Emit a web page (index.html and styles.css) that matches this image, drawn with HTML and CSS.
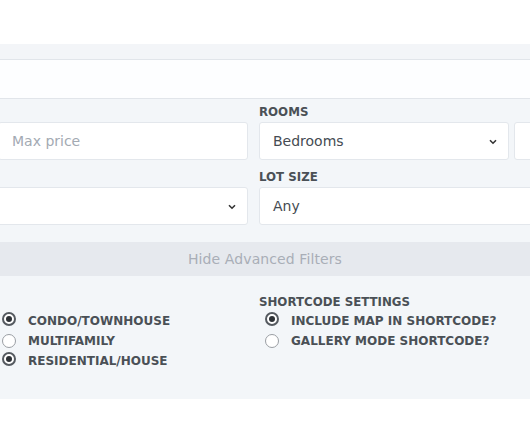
FILE: index.html
```html
<!DOCTYPE html>
<html>
<head>
<meta charset="utf-8">
<link rel="stylesheet" href="styles.css">
</head>
<body>
<div class="page">
  <div class="top"></div>
  <div class="band"></div>
  <div class="search"></div>
  <div class="filters">
    <div class="grid">
      <div class="col">
        <div class="label">&nbsp;</div>
        <div class="pair">
          <div class="field placeholder">&nbsp;</div>
          <div class="field placeholder">Max price</div>
        </div>
      </div>
      <div class="col">
        <div class="label">ROOMS</div>
        <div class="pair">
          <div class="field select">Bedrooms<svg class="chev" width="8" height="6" viewBox="0 0 8 6"><path d="M1 1.2 L4 4.2 L7 1.2" fill="none" stroke="#333" stroke-width="1.6"/></svg></div>
          <div class="field select">&nbsp;<svg class="chev" width="8" height="6" viewBox="0 0 8 6"><path d="M1 1.2 L4 4.2 L7 1.2" fill="none" stroke="#333" stroke-width="1.6"/></svg></div>
        </div>
      </div>
      <div class="col">
        <div class="label">&nbsp;</div>
        <div class="field select">&nbsp;<svg class="chev" width="8" height="6" viewBox="0 0 8 6"><path d="M1 1.2 L4 4.2 L7 1.2" fill="none" stroke="#333" stroke-width="1.6"/></svg></div>
      </div>
      <div class="col">
        <div class="label">LOT SIZE</div>
        <div class="field">Any</div>
      </div>
    </div>
  </div>
  <div class="toggle">Hide Advanced Filters</div>
  <div class="options">
    <div class="grid">
      <div class="col">
        <div class="label">&nbsp;</div>
        <ul class="radios left">
          <li><span class="radio on"></span>CONDO/TOWNHOUSE</li>
          <li><span class="radio"></span>MULTIFAMILY</li>
          <li><span class="radio on"></span>RESIDENTIAL/HOUSE</li>
        </ul>
      </div>
      <div class="col">
        <div class="label">SHORTCODE SETTINGS</div>
        <ul class="radios right">
          <li><span class="radio on"></span>INCLUDE MAP IN SHORTCODE?</li>
          <li><span class="radio"></span>GALLERY MODE SHORTCODE?</li>
        </ul>
      </div>
    </div>
  </div>
</div>
</body>
</html>
```
FILE: styles.css
```css
html, body {
  margin: 0;
  padding: 0;
  background: #ffffff;
  overflow: hidden;
}
body {
  font-family: "DejaVu Sans", "Open Sans", sans-serif;
  color: #444b52;
  width: 530px;
  height: 442px;
}
.page {
  width: 530px;
  overflow: hidden;
}
.top {
  height: 44px;
  background: #ffffff;
}
.band {
  height: 15px;
  background: #f3f5f8;
  border-bottom: 1px solid #e1e5ea;
}
.search {
  height: 38px;
  background: #fdfeff;
  border-bottom: 1px solid #e1e5ea;
}
.filters {
  background: #f3f6f9;
  padding: 3px 0 17px;
}
.grid {
  display: grid;
  grid-template-columns: 505px 505px;
  column-gap: 11px;
  row-gap: 7px;
  margin-left: -257px;
  width: 1021px;
}
.label {
  font-size: 11.8px;
  font-weight: 600;
  line-height: 20px;
  height: 20px;
  margin-bottom: 0;
  color: #4a5056;
  white-space: nowrap;
}
.pair {
  display: grid;
  grid-template-columns: 1fr 1fr;
  column-gap: 5px;
}
.field {
  position: relative;
  box-sizing: border-box;
  height: 38px;
  background: #ffffff;
  border: 1px solid #e3e7ec;
  border-radius: 3px;
  padding: 0 13px;
  font-size: 14px;
  line-height: 36px;
  color: #454b52;
  white-space: nowrap;
}
.placeholder {
  color: #a3aab3;
}
.chev {
  position: absolute;
  right: 11px;
  top: 16px;
}
.toggle {
  height: 34px;
  background: #e6e9ee;
  color: #a9aeb7;
  font-size: 14px;
  letter-spacing: 0.1px;
  line-height: 34px;
  text-align: center;
  padding-left: 0;
}
.options {
  background: #f3f6f9;
  height: 107px;
  padding-top: 16px;
}
.radios {
  list-style: none;
  margin: -1px 0 0;
  padding: 0;
}
.radios.left {
  padding-left: 259px;
}
.radios.right {
  padding-left: 6px;
}
.radios li {
  display: flex;
  align-items: center;
  height: 20px;
  font-size: 12px;
  font-weight: 600;
  color: #4a5056;
  white-space: nowrap;
}
.radio {
  box-sizing: border-box;
  width: 14px;
  height: 14px;
  border-radius: 50%;
  border: 1px solid #9a9ea3;
  background: #fff;
  margin-right: 12px;
  flex: none;
  position: relative;
}
.radio.on {
  border: 2px solid #555a60;
  top: -2px;
}
.radio.on::after {
  content: "";
  position: absolute;
  left: 2px;
  top: 2px;
  width: 6px;
  height: 6px;
  border-radius: 50%;
  background: #2d3136;
}
```
